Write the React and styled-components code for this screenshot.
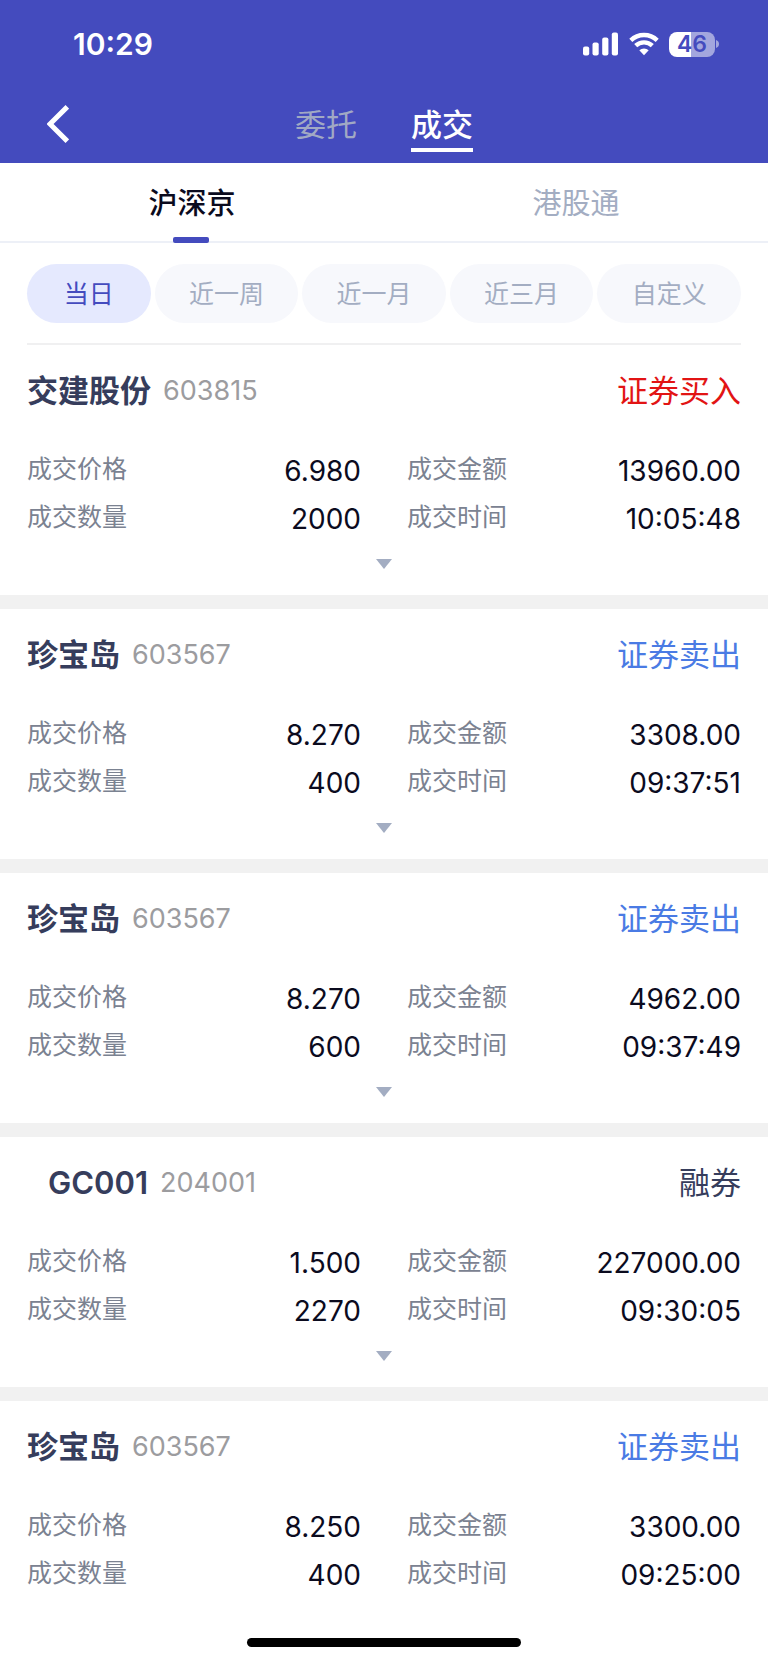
import React, { useState } from "react";
import styled, { createGlobalStyle, css } from "styled-components";

const GlobalStyle = createGlobalStyle`
  *, *::before, *::after { box-sizing: border-box; }
  body {
    margin: 0;
    background: #fff;
    color: #0b0b1e;
    font-family: Inter, "Noto Sans CJK SC", sans-serif;
  }
  button {
    margin: 0;
    padding: 0;
    border: 0;
    background: none;
    font: inherit;
    color: inherit;
    cursor: pointer;
  }
`;

const Page = styled.div`
  display: flex;
  flex-direction: column;
  min-height: 100vh;
`;

const Header = styled.header`
  background: #444bbe;
  color: #fff;
`;

const StatusBar = styled.div`
  display: flex;
  align-items: center;
  justify-content: space-between;
  height: 88px;
  padding: 0 49px 0 73px;
`;

const Clock = styled.time`
  font-size: 30px;
  line-height: 36px;
  font-weight: 600;
`;

const StatusIcons = styled.div`
  display: flex;
  align-items: center;
  gap: 10px;
`;

const Battery = styled.div`
  display: flex;
  align-items: center;
  gap: 1px;
`;

const BatteryBody = styled.div`
  width: 46px;
  height: 25px;
  border-radius: 8px;
  background: linear-gradient(to right, #fff 48%, #a3a6de 48%);
  color: #444bbe;
  font-size: 23px;
  line-height: 25px;
  font-weight: 600;
  text-align: center;
`;

const NavBar = styled.nav`
  display: grid;
  grid-template-columns: 1fr auto 1fr;
  height: 75px;
  padding: 0 43px;
`;

const BackButton = styled.button`
  display: flex;
  align-items: center;
  justify-self: start;
  height: 72px;
  padding: 0 4px;
`;

const NavTabs = styled.div`
  display: flex;
  gap: 54px;
`;

const NavTab = styled.button`
  height: 64px;
  padding-top: 14px;
  border-bottom: 4px solid ${(p) => (p.$active ? "#fff" : "transparent")};
  color: ${(p) => (p.$active ? "#fff" : "#a1a9c4")};
  font-size: 31px;
  line-height: 46px;
  font-weight: ${(p) => (p.$active ? 500 : 400)};
`;

const MarketTabs = styled.div`
  display: flex;
  height: 80px;
  border-bottom: 2px solid #edf0f7;
`;

const MarketTab = styled.button`
  position: relative;
  flex: 1;
  padding-top: 4px;
  color: ${(p) => (p.$active ? "#0b0b1e" : "#a3adc2")};
  font-size: 29px;
  line-height: 42px;
  font-weight: ${(p) => (p.$active ? 500 : 400)};

  ${(p) =>
    p.$active &&
    css`
      &::after {
        content: "";
        position: absolute;
        left: 50%;
        bottom: -2px;
        width: 36px;
        height: 6px;
        margin-left: -19px;
        border-radius: 2px;
        background: #444bbe;
      }
    `}
`;

const Content = styled.main`
  flex: 1;
`;

const Ranges = styled.div`
  display: flex;
  gap: 4px;
  margin: 0 27px;
  padding: 21px 0 20px;
  border-bottom: 2px solid #f0f0f1;
`;

const RangePill = styled.button`
  flex: ${(p) => (p.$short ? 31 : 36)} 1 0;
  height: 59px;
  border-radius: 30px;
  background: ${(p) => (p.$active ? "#e5e9fe" : "#f7f8fc")};
  color: ${(p) => (p.$active ? "#444bbe" : "#a3adc2")};
  font-size: 25px;
  line-height: 36px;
`;

const DealList = styled.ul`
  margin: 0;
  padding: 0;
  list-style: none;
`;

const DealItem = styled.li`
  padding: 0 27px;

  & + & {
    border-top: 14px solid #f1f1f1;
  }
`;

const DealHead = styled.div`
  display: flex;
  align-items: center;
  height: 92px;
  margin-bottom: 10px;
`;

const StockName = styled.h2`
  margin: 0;
  padding-left: ${(p) => (p.$indent ? 21 : 0)}px;
  color: #363d5c;
  font-size: 31px;
  line-height: 46px;
  font-weight: 600;
`;

const StockCode = styled.span`
  margin-left: 12px;
  color: #9c9c9f;
  font-size: 27px;
  line-height: 40px;
`;

const sideColors = { buy: "#e21414", sell: "#4a7be4", lend: "#363d5c" };

const Side = styled.span`
  margin-left: auto;
  color: ${(p) => sideColors[p.$side]};
  font-size: 31px;
  line-height: 46px;
`;

const Facts = styled.dl`
  display: grid;
  grid-template-columns: 1fr 1fr;
  column-gap: 46px;
  margin: 0;
`;

const Fact = styled.div`
  display: flex;
  align-items: center;
  justify-content: space-between;
  height: 48px;
`;

const FactLabel = styled.dt`
  padding-bottom: 4px;
  color: #7b8291;
  font-size: 25px;
  line-height: 36px;
`;

const FactValue = styled.dd`
  margin: 0;
  font-size: 28px;
  line-height: 40px;
`;

const Expand = styled.button`
  display: flex;
  justify-content: center;
  width: 100%;
  height: 52px;
  padding-top: 16px;
`;

const HomeArea = styled.footer`
  display: flex;
  justify-content: center;
  padding: 39px 0 15px;
`;

const HomeBar = styled.div`
  width: 274px;
  height: 9px;
  border-radius: 5px;
  background: #000;
`;

const SignalIcon = () => (
  <svg width="36" height="24" viewBox="0 0 36 24" fill="#fff" aria-hidden="true">
    <rect x="0" y="14.5" width="6.2" height="9" rx="2" />
    <rect x="9.5" y="10.5" width="6.2" height="13" rx="2" />
    <rect x="19.2" y="5.5" width="6.2" height="18" rx="2" />
    <rect x="28.8" y="0.5" width="6.2" height="23" rx="2" />
  </svg>
);

const WifiIcon = () => (
  <svg width="30" height="24" viewBox="0 0 30 24" aria-hidden="true">
    <g fill="none" stroke="#fff" strokeWidth="4.4">
      <path d="M1.8 8.300a19 19 0 0 1 26.400 0" />
      <path d="M6.700 13.700a12 12 0 0 1 16.600 0" />
    </g>
    <path d="M10.300 18.300a7 7 0 0 1 9.400 0L15 23.200z" fill="#fff" />
  </svg>
);

const BackIcon = () => (
  <svg width="22" height="38" viewBox="0 0 22 38" aria-hidden="true">
    <path d="M20.300 1.800 3 19l17.300 17.200" fill="none" stroke="#fff" strokeWidth="5" />
  </svg>
);

const BatteryNub = () => (
  <svg width="3" height="8" viewBox="0 0 3 8" aria-hidden="true">
    <path d="M0 0c4 1.200 4 6.800 0 8z" fill="#a3a6de" />
  </svg>
);

const CaretDown = () => (
  <svg width="16" height="10" viewBox="0 0 16 10" aria-hidden="true">
    <path d="M0 0h16L8 10z" fill="#a3adc2" />
  </svg>
);

const ranges = ["当日", "近一周", "近一月", "近三月", "自定义"];

const sideNames = { buy: "证券买入", sell: "证券卖出", lend: "融券" };

const deals = [
  { name: "交建股份", code: "603815", side: "buy", price: "6.980", amount: "13960.00", count: "2000", time: "10:05:48" },
  { name: "珍宝岛", code: "603567", side: "sell", price: "8.270", amount: "3308.00", count: "400", time: "09:37:51" },
  { name: "珍宝岛", code: "603567", side: "sell", price: "8.270", amount: "4962.00", count: "600", time: "09:37:49" },
  { name: "GC001", code: "204001", side: "lend", price: "1.500", amount: "227000.00", count: "2270", time: "09:30:05", indent: true },
  { name: "珍宝岛", code: "603567", side: "sell", price: "8.250", amount: "3300.00", count: "400", time: "09:25:00" },
];

function Deal({ deal, expandable }) {
  const facts = [
    ["成交价格", deal.price],
    ["成交金额", deal.amount],
    ["成交数量", deal.count],
    ["成交时间", deal.time],
  ];
  return (
    <DealItem>
      <DealHead>
        <StockName $indent={deal.indent}>{deal.name}</StockName>
        <StockCode>{deal.code}</StockCode>
        <Side $side={deal.side}>{sideNames[deal.side]}</Side>
      </DealHead>
      <Facts>
        {facts.map(([label, value]) => (
          <Fact key={label}>
            <FactLabel>{label}</FactLabel>
            <FactValue>{value}</FactValue>
          </Fact>
        ))}
      </Facts>
      {expandable && (
        <Expand type="button" aria-label="展开">
          <CaretDown />
        </Expand>
      )}
    </DealItem>
  );
}

export default function App() {
  const [page, setPage] = useState("成交");
  const [market, setMarket] = useState("沪深京");
  const [range, setRange] = useState("当日");

  return (
    <Page>
      <GlobalStyle />
      <Header>
        <StatusBar>
          <Clock>10:29</Clock>
          <StatusIcons>
            <SignalIcon />
            <WifiIcon />
            <Battery>
              <BatteryBody>46</BatteryBody>
              <BatteryNub />
            </Battery>
          </StatusIcons>
        </StatusBar>
        <NavBar>
          <BackButton type="button" aria-label="返回">
            <BackIcon />
          </BackButton>
          <NavTabs>
            {["委托", "成交"].map((t) => (
              <NavTab key={t} type="button" $active={t === page} onClick={() => setPage(t)}>
                {t}
              </NavTab>
            ))}
          </NavTabs>
        </NavBar>
      </Header>
      <MarketTabs>
        {["沪深京", "港股通"].map((t) => (
          <MarketTab key={t} type="button" $active={t === market} onClick={() => setMarket(t)}>
            {t}
          </MarketTab>
        ))}
      </MarketTabs>
      <Content>
        <Ranges>
          {ranges.map((t) => (
            <RangePill
              key={t}
              type="button"
              $short={t.length < 3}
              $active={t === range}
              onClick={() => setRange(t)}
            >
              {t}
            </RangePill>
          ))}
        </Ranges>
        <DealList>
          {deals.map((deal, i) => (
            <Deal key={deal.time} deal={deal} expandable={i < deals.length - 1} />
          ))}
        </DealList>
      </Content>
      <HomeArea>
        <HomeBar />
      </HomeArea>
    </Page>
  );
}
